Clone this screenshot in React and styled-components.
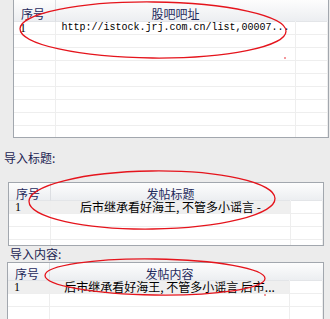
import React from 'react'
import styled, { createGlobalStyle } from 'styled-components'

const GlobalStyle = createGlobalStyle`
  html, body {
    margin: 0;
    padding: 0;
    background: #ececec;
    overflow: hidden;
  }
  body {
    font-family: "Noto Sans CJK SC", sans-serif;
  }
`

const Page = styled.div`
  position: relative;
  width: 330px;
  height: 319px;
  overflow: hidden;
  display: flex;
  flex-direction: column;
`

const Grid = styled.div`
  margin: ${p => p.$margin};
  width: ${p => p.$width}px;
  height: ${p => p.$height}px;
  box-sizing: border-box;
  border: 1px solid #a2a7ae;
  background: #fff;
  overflow: hidden;
  flex-shrink: 0;
`

const Row = styled.div`
  display: grid;
  grid-template-columns: 42px 240px 1fr;
  height: ${p => p.$h}px;
`

const HeadCell = styled.div`
  display: flex;
  align-items: center;
  justify-content: ${p => (p.$center ? 'center' : 'flex-start')};
  padding: ${p => p.$pt}px 0 0 ${p => (p.$center ? 0 : 7)}px;
  box-sizing: border-box;
  background: linear-gradient(#fdfdfd, #eceef1);
  border-bottom: 1px solid #e3e5e8;
  border-right: 1px solid ${p => (p.$divider ? '#dcdee2' : 'transparent')};
  color: #1f2a5c;
  font-size: 12px;
  line-height: 13px;
  white-space: nowrap;
`

const Cell = styled.div`
  display: flex;
  align-items: center;
  justify-content: ${p => (p.$center ? 'center' : 'flex-start')};
  padding-left: ${p => (p.$center ? 0 : 6)}px;
  box-sizing: border-box;
  border-right: 1px solid #eeeeee;
  border-bottom: 1px solid #eeeeee;
  background: ${p => (p.$sel ? '#efefef' : '#fff')};
  color: #000;
  font-family: ${p => (p.$mono ? '"Liberation Mono", monospace' : '"Noto Sans CJK SC", sans-serif')};
  font-size: ${p => (p.$mono ? 10 : 12)}px;
  line-height: 12px;
  white-space: nowrap;
`

const IndexText = styled.span`
  font-family: "Liberation Serif", serif;
  font-size: 12px;
`

const Label = styled.div`
  height: 16px;
  line-height: 16px;
  font-size: 12px;
  color: #1c2452;
  padding-left: ${p => p.$indent}px;
  margin: ${p => p.$margin};
  flex-shrink: 0;
`

const Marks = styled.svg`
  position: absolute;
  left: 0;
  top: 0;
  pointer-events: none;
`

function Table({ margin, width, height, headH, headPad, title, value, mono, sel, rows }) {
  return (
    <Grid $margin={margin} $width={width} $height={height}>
      <Row $h={headH}>
        <HeadCell $pt={headPad} $divider>序号</HeadCell>
        <HeadCell $pt={headPad} $center>{title}</HeadCell>
        <HeadCell $pt={headPad} />
      </Row>
      {Array.from({ length: rows }).map((_, i) => (
        <Row key={i} $h={13}>
          <Cell $sel={i === 0 && sel}>{i === 0 && <IndexText>1</IndexText>}</Cell>
          <Cell $sel={i === 0 && sel} $center $mono={mono}>{i === 0 ? value : ''}</Cell>
          <Cell />
        </Row>
      ))}
    </Grid>
  )
}

export default function App() {
  return (
    <>
      <GlobalStyle />
      <Page>
        <Table
          margin="-1px 0 0 13px"
          width={316}
          height={139}
          headH={22}
          headPad={5}
          title="股吧吧址"
          value="http://istock.jrj.com.cn/list,00007..."
          mono
          rows={9}
        />
        <Label $indent={4} $margin="12px 0 16px 0">导入标题:</Label>
        <Table
          margin="0 0 0 8px"
          width={316}
          height={64}
          headH={18}
          headPad={3}
          title="发帖标题"
          value="后市继承看好海王, 不管多小谣言 -"
          sel
          rows={4}
        />
        <Label $indent={10} $margin="0">导入内容:</Label>
        <Table
          margin="0 0 0 7px"
          width={317}
          height={90}
          headH={18}
          headPad={3}
          title="发帖内容"
          value="后市继承看好海王, 不管多小谣言 后市..."
          sel
          rows={5}
        />
        <Marks width="330" height="319" viewBox="0 0 330 319">
          <g fill="none" stroke="#e5141c" strokeWidth="1.3">
            <ellipse cx="153" cy="30" rx="133" ry="28" transform="rotate(0.5 153 30)" />
            <ellipse cx="152" cy="200" rx="123" ry="29" transform="rotate(-0.7 152 200)" />
            <ellipse cx="155" cy="277" rx="110" ry="18" transform="rotate(0.8 155 277)" />
          </g>
          <circle cx="285" cy="58" r="0.8" fill="#e5141c" />
          <circle cx="265" cy="295" r="0.8" fill="#e5141c" />
        </Marks>
      </Page>
    </>
  )
}
